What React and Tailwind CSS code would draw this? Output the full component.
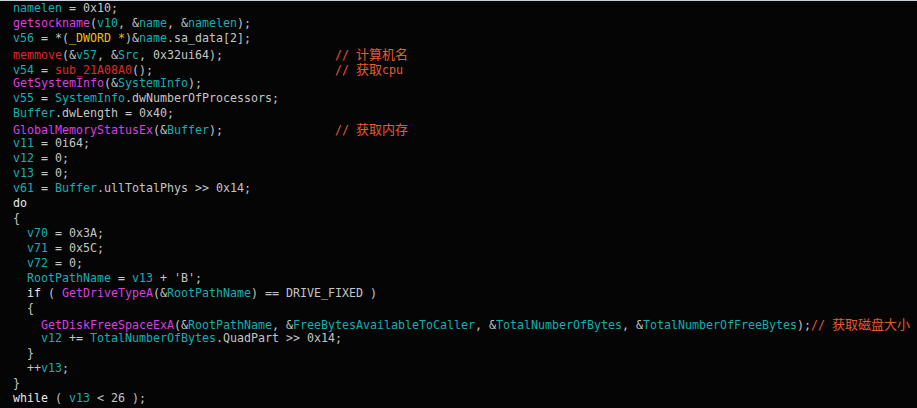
const C = "text-[#14aeb4]"; // variables
const T = "text-[#c4c4c4]"; // plain
const M = "text-[#dc3ee0]"; // imported funcs
const R = "text-[#de2a26]"; // local funcs
const Y = "text-[#e6c200]"; // types
const W = "text-[#e8e8e8]"; // keywords
const K = "text-[#e45a32]"; // comments

const lines = [
  [[C, "namelen"], [T, " = 0x10;"]],
  [[M, "getsockname"], [T, "("], [C, "v10"], [T, ", &"], [C, "name"], [T, ", &"], [C, "namelen"], [T, ");"]],
  [[C, "v56"], [T, " = *("], [Y, "_DWORD *"], [T, ")&"], [C, "name"], [T, ".sa_data[2];"]],
  [[R, "memmove"], [T, "(&"], [C, "v57"], [T, ", &"], [C, "Src"], [T, ", 0x32ui64);                "], [K, "// ", "计算机名"]],
  [[C, "v54"], [T, " = "], [R, "sub_21A08A0"], [T, "();                          "], [K, "// ", "获取", "cpu"]],
  [[M, "GetSystemInfo"], [T, "(&"], [C, "SystemInfo"], [T, ");"]],
  [[C, "v55"], [T, " = "], [C, "SystemInfo"], [T, ".dwNumberOfProcessors;"]],
  [[C, "Buffer"], [T, ".dwLength = 0x40;"]],
  [[M, "GlobalMemoryStatusEx"], [T, "(&"], [C, "Buffer"], [T, ");                "], [K, "// ", "获取内存"]],
  [[C, "v11"], [T, " = 0i64;"]],
  [[C, "v12"], [T, " = 0;"]],
  [[C, "v13"], [T, " = 0;"]],
  [[C, "v61"], [T, " = "], [C, "Buffer"], [T, ".ullTotalPhys >> 0x14;"]],
  [[W, "do"]],
  [[T, "{"]],
  [[T, "  "], [C, "v70"], [T, " = 0x3A;"]],
  [[T, "  "], [C, "v71"], [T, " = 0x5C;"]],
  [[T, "  "], [C, "v72"], [T, " = 0;"]],
  [[T, "  "], [C, "RootPathName"], [T, " = "], [C, "v13"], [T, " + 'B';"]],
  [[W, "  if"], [T, " ( "], [M, "GetDriveTypeA"], [T, "(&"], [C, "RootPathName"], [T, ") == DRIVE_FIXED )"]],
  [[T, "  {"]],
  [[T, "    "], [M, "GetDiskFreeSpaceExA"], [T, "(&"], [C, "RootPathName"], [T, ", &"], [C, "FreeBytesAvailableToCaller"], [T, ", &"], [C, "TotalNumberOfBytes"], [T, ", &"], [C, "TotalNumberOfFreeBytes"], [T, ");"], [K, "// ", "获取磁盘大小"]],
  [[T, "    "], [C, "v12"], [T, " += "], [C, "TotalNumberOfBytes"], [T, ".QuadPart >> 0x14;"]],
  [[T, "  }"]],
  [[T, "  ++"], [C, "v13"], [T, ";"]],
  [[T, "}"]],
  [[W, "while"], [T, " ( "], [C, "v13"], [T, " < 26 );"]],
];

function Seg({ seg }) {
  const [cls, text, cjk, tail] = seg;
  if (cjk) {
    return (
      <span className={cls}>
        {text}
        <span className="text-[13px] [font-family:'Noto_Sans_CJK_SC',sans-serif]">{cjk}</span>
        {tail}
      </span>
    );
  }
  return <span className={cls}>{text}</span>;
}

export default function App() {
  return (
    <div className="w-[917px] h-[408px] bg-[#050505] border-t border-[#c9d1dc] overflow-hidden">
      <div className="pl-[13px] pt-0 text-[11.63px] leading-[15px] whitespace-pre [font-family:'DejaVu_Sans_Mono','Liberation_Mono',monospace]">
        {lines.map((segs, i) => (
          <div key={i} className="h-[15px]">
            {segs.map((s, j) => (
              <Seg key={j} seg={s} />
            ))}
          </div>
        ))}
      </div>
    </div>
  );
}
